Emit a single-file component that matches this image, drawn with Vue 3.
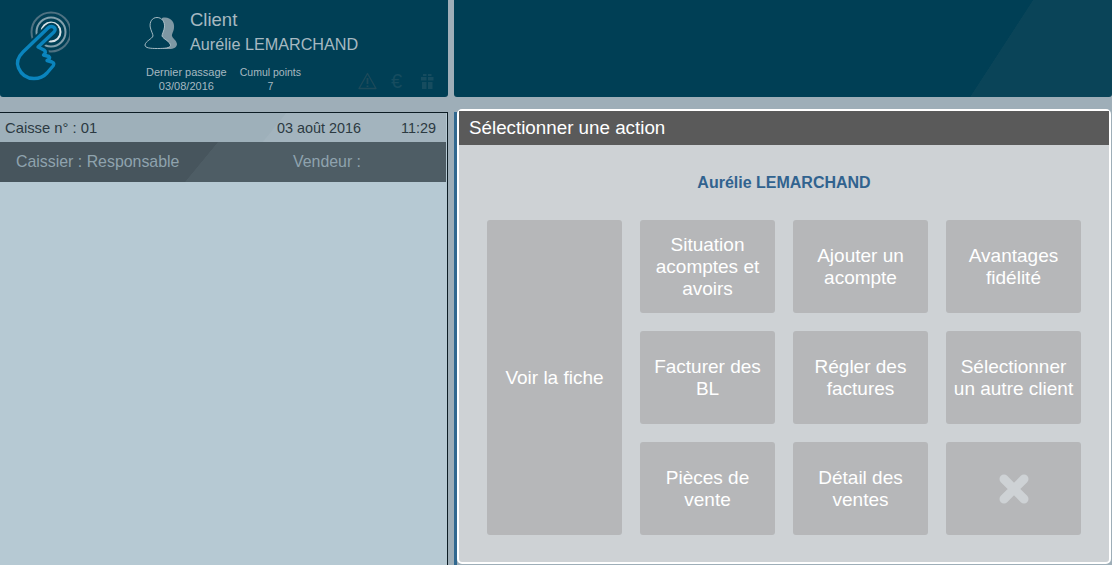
<script setup>
const buttons = [
  'Situation acomptes et avoirs', 'Ajouter un acompte', 'Avantages fidélité',
  'Facturer des BL', 'Régler des factures', 'Sélectionner un autre client',
  'Pièces de vente', 'Détail des ventes'
]
const hand = 'M38 47 L54 32 Q56.5 29 53.5 27 Q50.5 25.5 48 28 L23 52 Q15 60 18.5 68 Q23 78.500 34 78.500 Q42 78.500 47 73 L53 66 Q55 63 52 62 L47 60.500 Q51 58 49 56.500 L43.500 55 Q47 52 44 50 Z'
</script>

<template>
  <div class="page">
    <header class="top">
      <div class="top-left">
        <div class="logo">
          <svg width="70" height="90" viewBox="0 0 70 90" fill="none">
            <circle cx="51" cy="32" r="19.500" stroke="#4f7282" stroke-width="2"/>
            <circle cx="51" cy="32" r="14.500" stroke="#83a0ac" stroke-width="2"/>
            <circle cx="51" cy="32" r="9.500" stroke="#d8e2e6" stroke-width="2"/>
            <path :d="hand" stroke="#003f55" stroke-width="7" stroke-linejoin="round"/>
            <path :d="hand" fill="#003f55" stroke="#0a84bd" stroke-width="3.400" stroke-linejoin="round"/>
          </svg>
        </div>
        <div class="client">
          <div class="client-head">
            <svg class="avatar" width="34" height="34" viewBox="0 0 34 34" fill="none">
              <path d="M18 2 C26 0 31 6 30 12 C29.500 16 27.500 18 28 20 C29 23 32.500 24 33 28 C33 31 30 33 25 33 L18 33 Z" fill="#7f98a4"/>
              <path d="M13 1.500 C8 1.500 5.500 6 6.200 11 C7 15 9 18 9 20 C8 23 1.500 25 1 29 C1 32 6 32.500 13.500 32.500 C21 32.500 26 32 26.500 29.500 C26.500 25.500 19 23 18 20 C18 18 20 15 20.500 11 C21 6 18 1.500 13 1.500 Z" fill="#003f55" stroke="#b7c8cf" stroke-width="0.900"/>
            </svg>
            <div class="names">
              <div class="label">Client</div>
              <div class="name">Aurélie LEMARCHAND</div>
            </div>
          </div>
          <div class="stats">
            <div class="stat"><span>Dernier passage</span><span>03/08/2016</span></div>
            <div class="stat narrow"><span>Cumul points</span><span>7</span></div>
          </div>
        </div>
        <div class="status-icons">
          <svg width="19" height="18" viewBox="0 0 19 18" fill="none">
            <path d="M9.500 1.500 L18 16.500 H1 Z" stroke="#1c4a5a" stroke-width="1.300" stroke-linejoin="round"/>
            <path d="M9.500 6 V12 M9.500 13.500 V15" stroke="#1c4a5a" stroke-width="1.800"/>
          </svg>
          <span class="euro">€</span>
          <svg width="15" height="16" viewBox="0 0 15 16" fill="#164c5f">
            <rect x="1" y="4" width="5.500" height="3.500"/><rect x="8" y="4" width="5.500" height="3.500"/>
            <rect x="2" y="9" width="4.500" height="7"/><rect x="8" y="9" width="4.500" height="7"/>
            <rect x="3" y="1" width="3.500" height="2"/><rect x="8" y="1" width="3.500" height="2"/>
          </svg>
        </div>
      </div>
      <div class="top-right"></div>
    </header>

    <main class="body">
      <section class="caisse">
        <div class="caisse-top">
          <span class="num">Caisse n° : 01</span>
          <span class="date">03 août 2016</span>
          <span class="time">11:29</span>
        </div>
        <div class="caisse-staff">
          <span class="cashier">Caissier : Responsable</span>
          <span class="seller">Vendeur :</span>
        </div>
      </section>

      <div class="dialog-edge"></div>

      <section class="dialog">
        <h1 class="title">Sélectionner une action</h1>
        <div class="content">
          <div class="customer">Aurélie LEMARCHAND</div>
          <div class="grid">
            <button class="btn tall">Voir la fiche</button>
            <button v-for="b in buttons" :key="b" class="btn">{{ b }}</button>
            <button class="btn" aria-label="Fermer">
              <svg width="32" height="32" viewBox="0 0 32 32">
                <path d="M6 6 L26 26 M26 6 L6 26" stroke="#ced2d5" stroke-width="9" stroke-linecap="round"/>
              </svg>
            </button>
          </div>
        </div>
      </section>
    </main>
  </div>
</template>

<style scoped>
.page {
  width: 1112px;
  height: 565px;
  overflow: hidden;
  background: #9eaeb8;
  font-family: "Liberation Sans", Arial, sans-serif;
}
.top {
  display: flex;
  gap: 6px;
  height: 97px;
}
.top-left {
  width: 448px;
  background: #003f55;
  border-radius: 0 0 3px 3px;
  display: flex;
  position: relative;
}
.top-right {
  flex: 1;
  border-radius: 0 0 3px 3px;
  background: linear-gradient(123deg, #003f55 0, #003f55 485.500px, #0a4458 486px);
}
.logo {
  width: 144px;
  flex: none;
}
.client {
  display: flex;
  flex-direction: column;
}
.client-head {
  display: flex;
  height: 62px;
}
.avatar {
  margin-top: 16px;
  margin-right: 12px;
}
.names {
  padding-top: 9px;
  color: #a7b9c1;
}
.label {
  font-size: 18.500px;
  line-height: 21px;
}
.name {
  font-size: 16.200px;
  line-height: 18px;
  margin-top: 5px;
}
.stats {
  display: flex;
  gap: 13px;
  margin: 3px 0 0 2px;
  color: #a7b9c1;
  font-size: 11px;
  line-height: 14px;
}
.stat {
  display: flex;
  flex-direction: column;
  align-items: center;
}
.narrow {
  font-size: 10.500px;
}
.status-icons {
  position: absolute;
  left: 358px;
  top: 72px;
  display: flex;
  align-items: center;
  gap: 14px;
}
.euro {
  color: #164c5f;
  font-size: 20px;
  line-height: 18px;
  width: 15px;
}
.body {
  display: flex;
  height: 468px;
}
.caisse {
  width: 448px;
  height: 453px;
  margin-top: 15px;
  padding-right: 1px;
  box-sizing: border-box;
  border-top: 1px solid #0c1c24;
  border-right: 1px solid #0c1c24;
  background: #b6c9d3;
}
.caisse-top {
  display: flex;
  align-items: center;
  height: 29px;
  padding: 0 10px 0 5px;
  background: linear-gradient(129deg, #9eb0ba 0, #9eb0ba 222px, #a3b4be 223px);
  font-size: 14.400px;
  color: #2c3a42;
}
.num { flex: 1; font-size: 14.800px; }
.time { margin-left: 40px; }
.caisse-staff {
  display: flex;
  align-items: center;
  height: 40px;
  padding-left: 16px;
  font-size: 15.900px;
  color: #8fa3ae;
  background: linear-gradient(129.500deg, #47555d 0, #47555d 168px, #4e5d65 168.500px);
}
.cashier { width: 277px; }
.dialog-edge {
  flex: none;
  width: 3px;
  margin: 15px 0 0 6px;
  background: #31688f;
}
.dialog {
  flex: none;
  margin-top: 12px;
  width: 654px;
  height: 455px;
  box-sizing: border-box;
  border: 2px solid #fff;
  border-radius: 5px;
  background: #ced2d5;
  display: flex;
  flex-direction: column;
}
.title {
  margin: 0;
  height: 34px;
  padding-left: 10px;
  background: #5a5a5a;
  color: #fff;
  font-size: 18.800px;
  font-weight: 400;
  line-height: 34px;
}
.content {
  flex: 1;
  padding: 0 28px;
}
.customer {
  height: 75px;
  padding-top: 29px;
  box-sizing: border-box;
  color: #31638f;
  font-size: 16px;
  font-weight: 700;
  line-height: 17px;
  text-align: center;
}
.grid {
  display: grid;
  grid-template-columns: repeat(4, 135px);
  grid-template-rows: repeat(3, 93px);
  gap: 18px;
}
.btn {
  border: 0;
  border-radius: 3px;
  padding: 0 6px;
  background: #b6b7b9;
  color: #fff;
  font-family: inherit;
  font-size: 19px;
  line-height: 22px;
  display: flex;
  align-items: center;
  justify-content: center;
  text-align: center;
}
.tall {
  grid-row: 1 / span 3;
}
</style>
